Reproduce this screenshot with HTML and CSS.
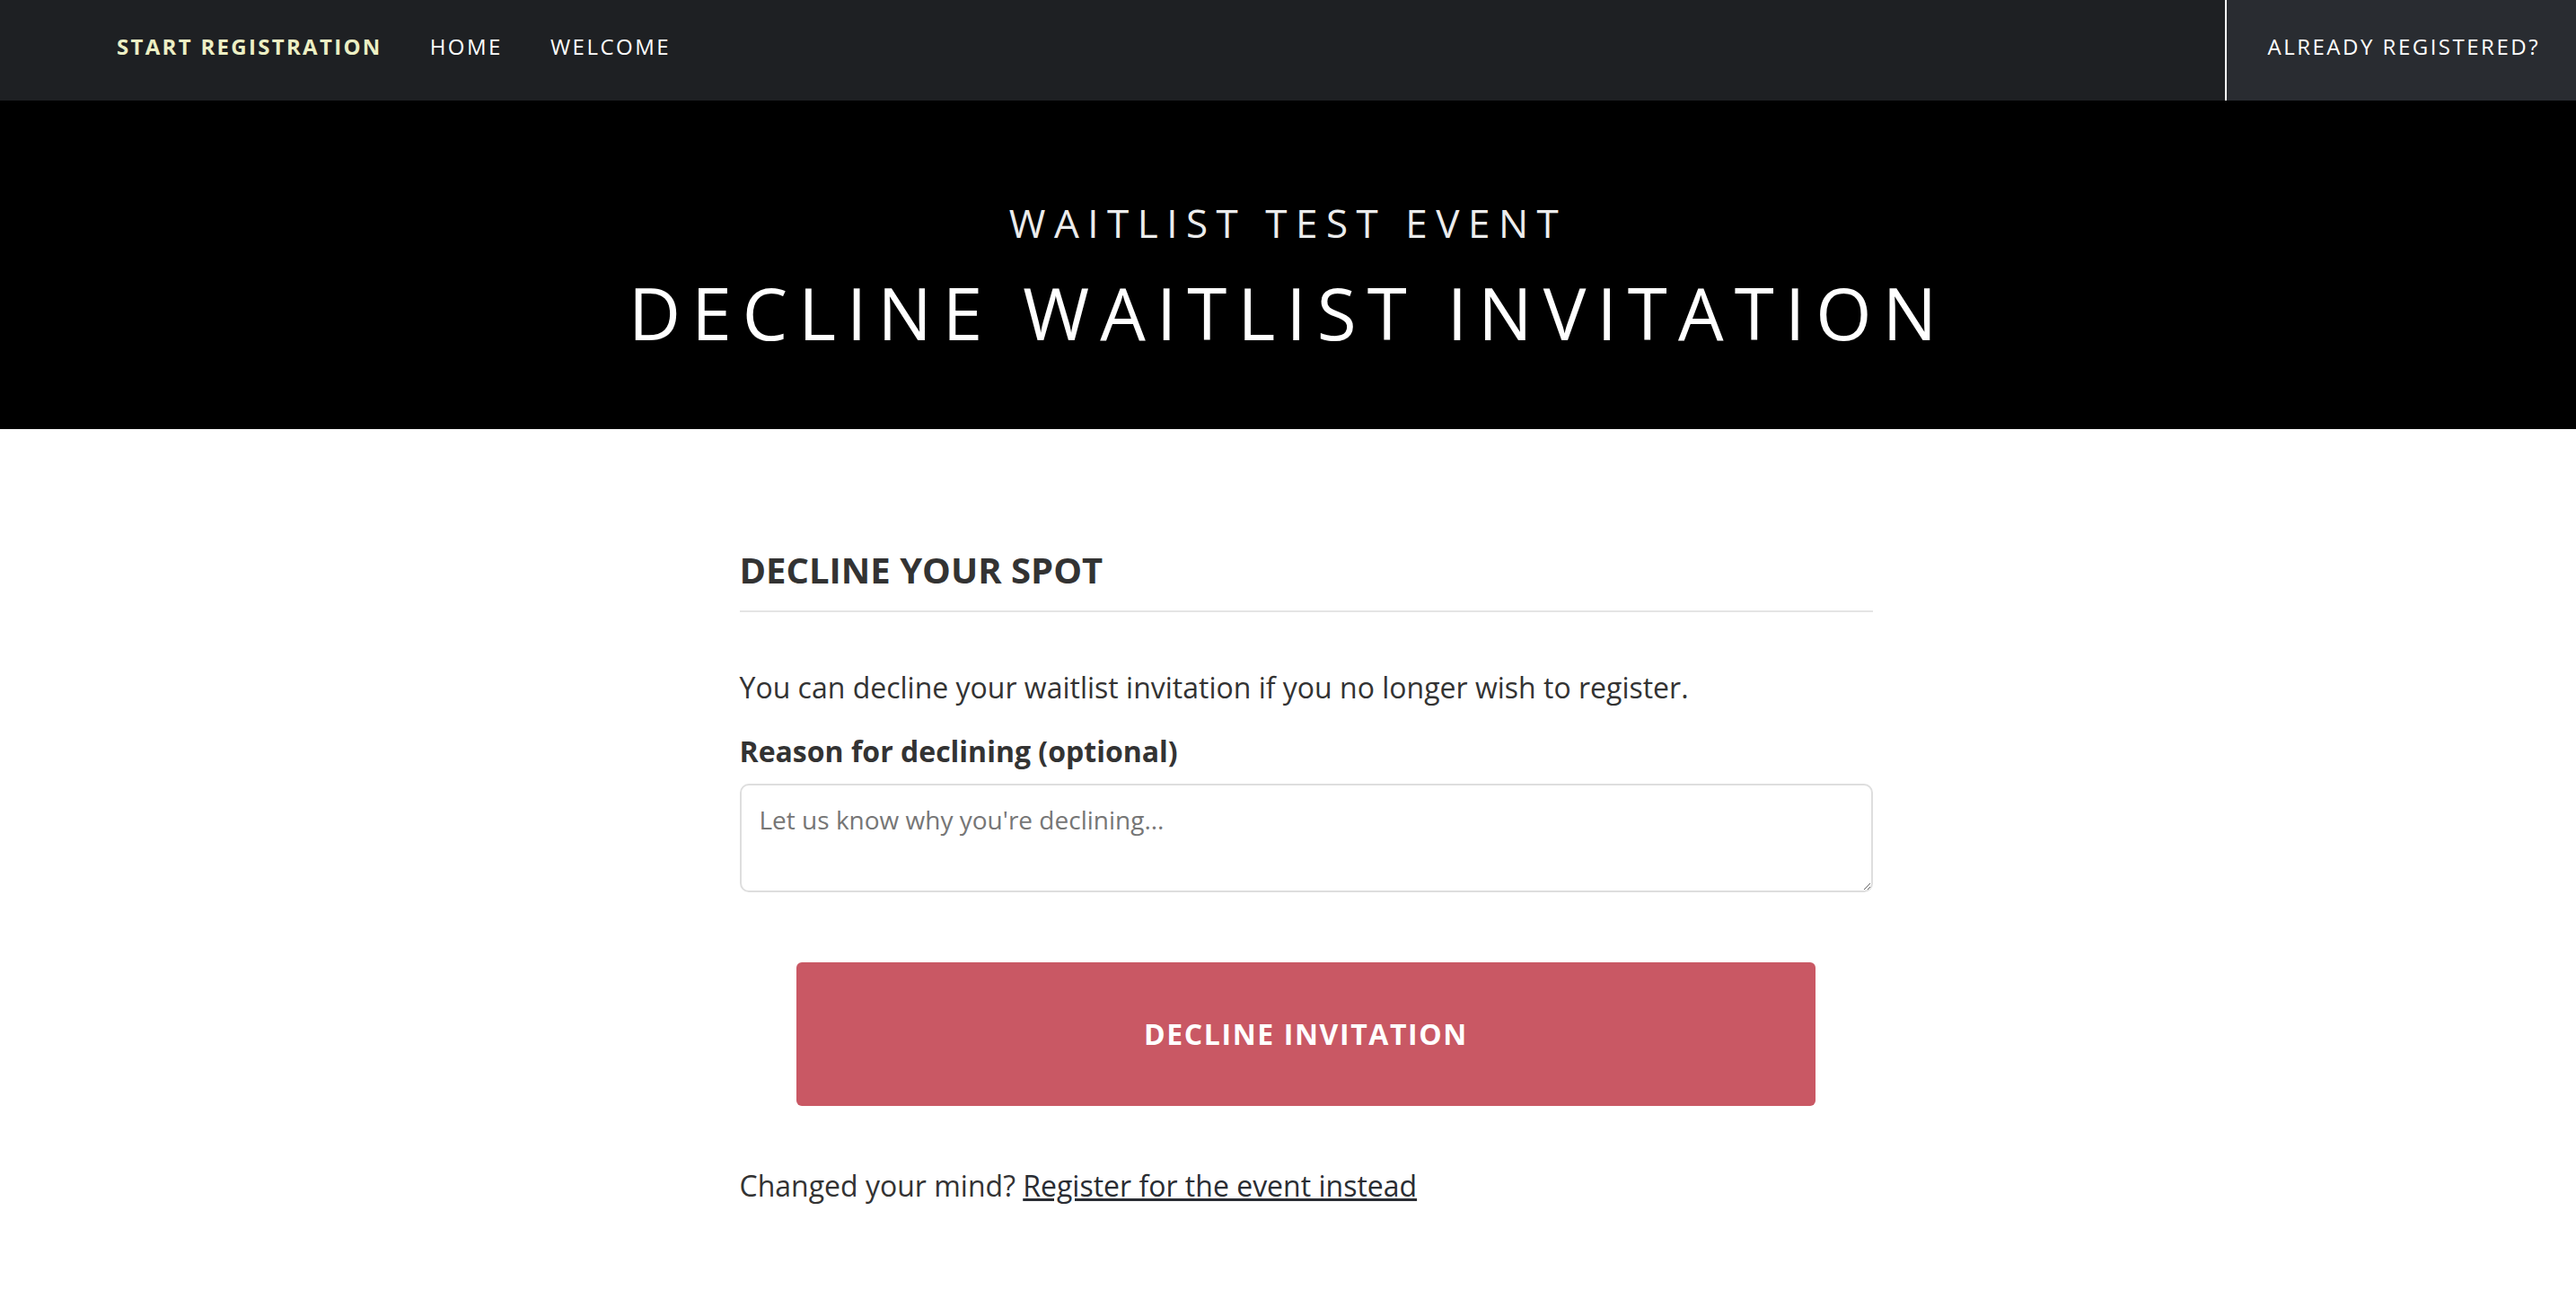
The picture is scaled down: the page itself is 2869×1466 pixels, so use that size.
FILE: index.html
```html
<!DOCTYPE html>
<html lang="en">
<head>
<meta charset="utf-8">
<title>Decline Waitlist Invitation</title>
<link rel="stylesheet" href="styles.css">
</head>
<body>
<header class="topnav">
  <nav class="nav-left">
    <a class="nav-link active" href="#">Start Registration</a>
    <a class="nav-link" href="#">Home</a>
    <a class="nav-link" href="#">Welcome</a>
  </nav>
  <a class="nav-right" href="#">Already Registered?</a>
</header>
<section class="hero">
  <h2 class="hero-sub">Waitlist Test Event</h2>
  <h1 class="hero-title">Decline Waitlist Invitation</h1>
</section>
<main class="container">
  <h3 class="section-title">Decline Your Spot</h3>
  <p class="intro">You can decline your waitlist invitation if you no longer wish to register.</p>
  <form class="decline-form">
    <label class="field-label" for="reason">Reason for declining (optional)</label>
    <textarea id="reason" class="field-textarea" rows="2" placeholder="Let us know why you're declining..."></textarea>
    <button type="button" class="btn-decline">Decline Invitation</button>
  </form>
  <p class="changed">Changed your mind? <a href="#" class="changed-link">Register for the event instead</a></p>
</main>
</body>
</html>
```

FILE: styles.css
```css
html, body {
  margin: 0;
  padding: 0;
  background: #ffffff;
}

body {
  font-family: "Open Sans", "Liberation Sans", sans-serif;
  color: #333333;
}

.topnav {
  display: flex;
  justify-content: space-between;
  align-items: stretch;
  height: 112px;
  background: #1e2023;
}

.nav-left {
  display: flex;
  align-items: center;
  gap: 53px;
  padding-left: 130px;
  padding-bottom: 9px;
}

.nav-link {
  color: #ffffff;
  text-decoration: none;
  text-transform: uppercase;
  font-size: 24px;
  font-weight: 500;
  letter-spacing: 2.5px;
}

.nav-link.active {
  color: #ecefc4;
  font-weight: 700;
  letter-spacing: 2.3px;
}

.nav-right {
  display: flex;
  align-items: center;
  padding: 0 40px 9px 45px;
  background: #292c31;
  border-left: 2px solid #ffffff;
  color: #ffffff;
  text-decoration: none;
  text-transform: uppercase;
  font-size: 24px;
  font-weight: 500;
  letter-spacing: 2.5px;
}

.hero {
  background: #000000;
  text-align: center;
  padding: 110px 0 82px;
  color: #ffffff;
}

.hero-sub {
  margin: 0;
  font-size: 44px;
  line-height: 52.8px;
  font-weight: 400;
  letter-spacing: 9.5px;
  text-transform: uppercase;
  color: #ececec;
}

.hero-title {
  margin: 25px 0 0;
  font-size: 80px;
  line-height: 96px;
  font-weight: 400;
  letter-spacing: 12.1px;
  text-transform: uppercase;
}

.container {
  max-width: 1302px;
  margin: 0 auto;
  padding: 133px 0 80px 40px;
  box-sizing: border-box;
}

.section-title {
  margin: 0;
  font-size: 40px;
  line-height: 48px;
  font-weight: 700;
  text-transform: uppercase;
  color: #333333;
  padding-bottom: 21px;
  border-bottom: 2px solid #e5e5e5;
}

.intro {
  margin: 60px 0 23px;
  font-size: 32px;
  line-height: 48px;
}

.decline-form {
  margin: 0;
}

.field-label {
  display: block;
  font-size: 32px;
  line-height: 48px;
  font-weight: 700;
  margin-bottom: 12px;
}

.field-textarea {
  display: block;
  width: 100%;
  height: 121px;
  box-sizing: border-box;
  border: 2px solid #dedede;
  border-radius: 10px;
  padding: 17px 20px;
  font-family: "Open Sans", "Liberation Sans", sans-serif;
  font-size: 28px;
  line-height: 42px;
  color: #333333;
  background: #ffffff;
}

.field-textarea::placeholder {
  color: #767676;
}

.btn-decline {
  display: block;
  width: 90%;
  height: 160px;
  margin: 78px auto 0;
  border: 0;
  border-radius: 6px;
  background: #c95864;
  color: #ffffff;
  font-family: "Open Sans", "Liberation Sans", sans-serif;
  font-size: 32px;
  font-weight: 700;
  letter-spacing: 1.6px;
  text-transform: uppercase;
}

.changed {
  margin: 65px 0 0;
  font-size: 32px;
  line-height: 48px;
}

.changed-link {
  color: #2a2d33;
  text-decoration: underline;
}
```
